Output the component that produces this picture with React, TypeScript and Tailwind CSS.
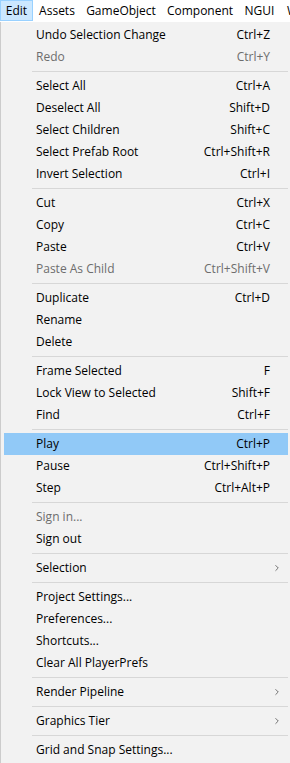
import { ChevronRight } from "lucide-react";

type Item =
  | { kind: "sep" }
  | { kind: "item"; label: string; shortcut?: string; disabled?: boolean; active?: boolean; sub?: boolean };

const sep: Item = { kind: "sep" };
const it = (label: string, shortcut?: string, extra: Partial<Extract<Item, { kind: "item" }>> = {}): Item => ({
  kind: "item",
  label,
  shortcut,
  ...extra,
});

const ITEMS: Item[] = [
  it("Undo Selection Change", "Ctrl+Z"),
  it("Redo", "Ctrl+Y", { disabled: true }),
  sep,
  it("Select All", "Ctrl+A"),
  it("Deselect All", "Shift+D"),
  it("Select Children", "Shift+C"),
  it("Select Prefab Root", "Ctrl+Shift+R"),
  it("Invert Selection", "Ctrl+I"),
  sep,
  it("Cut", "Ctrl+X"),
  it("Copy", "Ctrl+C"),
  it("Paste", "Ctrl+V"),
  it("Paste As Child", "Ctrl+Shift+V", { disabled: true }),
  sep,
  it("Duplicate", "Ctrl+D"),
  it("Rename"),
  it("Delete"),
  sep,
  it("Frame Selected", "F"),
  it("Lock View to Selected", "Shift+F"),
  it("Find", "Ctrl+F"),
  sep,
  it("Play", "Ctrl+P", { active: true }),
  it("Pause", "Ctrl+Shift+P"),
  it("Step", "Ctrl+Alt+P"),
  sep,
  it("Sign in...", undefined, { disabled: true }),
  it("Sign out"),
  sep,
  it("Selection", undefined, { sub: true }),
  sep,
  it("Project Settings..."),
  it("Preferences..."),
  it("Shortcuts..."),
  it("Clear All PlayerPrefs"),
  sep,
  it("Render Pipeline", undefined, { sub: true }),
  sep,
  it("Graphics Tier", undefined, { sub: true }),
  sep,
  it("Grid and Snap Settings..."),
];

// top-level menus after "Edit"; widths keep the labels where the reference has them
const MENUBAR: { label: string; w: string }[] = [
  { label: "Assets", w: "w-[48px]" },
  { label: "GameObject", w: "w-[80px]" },
  { label: "Component", w: "w-[78px]" },
  { label: "NGUI", w: "w-[41px]" },
];

function MenuRow({ item }: { item: Item }) {
  if (item.kind === "sep") {
    return (
      <div className="h-[7px] flex items-center">
        <div className="ml-[31px] mr-[2px] flex-1 h-px bg-[#d7d7d7]" />
      </div>
    );
  }
  return (
    <div
      className={
        "ml-[3px] mr-[2px] h-[22px] flex items-center pl-[32px] " +
        (item.active ? "bg-[#91c9f7] " : "") +
        (item.disabled ? "text-[#6d6d6d]" : "text-black")
      }
    >
      <span className="flex-1 whitespace-nowrap">{item.label}</span>
      {item.shortcut && <span className="whitespace-nowrap">{item.shortcut}</span>}
      <span className="w-[18px] h-full flex items-center pl-[2px]">
        {item.sub && <ChevronRight size={10} strokeWidth={1.6} className="text-[#333]" />}
      </span>
    </div>
  );
}

export default function App() {
  return (
    <div className="w-[290px] h-[763px] overflow-hidden bg-white text-[12px] font-['Open_Sans',sans-serif] leading-none">
      {/* menu bar */}
      <div className="h-[22px] flex items-stretch whitespace-nowrap">
        <div className="w-[33px] h-[21px] shrink-0 bg-[#cce8ff] border border-[#99d1ff] flex items-center justify-center">
          Edit
        </div>
        {MENUBAR.map((m) => (
          <div key={m.label} className={m.w + " shrink-0 flex items-center justify-center"}>
            {m.label}
          </div>
        ))}
        <div className="pl-[7px] flex items-center overflow-hidden">W</div>
      </div>

      {/* dropdown */}
      <div className="h-[741px] bg-[#f2f2f2] border-l border-[#cccccc] pt-[2px]">
        {ITEMS.map((item, i) => (
          <MenuRow key={i} item={item} />
        ))}
      </div>
    </div>
  );
}
